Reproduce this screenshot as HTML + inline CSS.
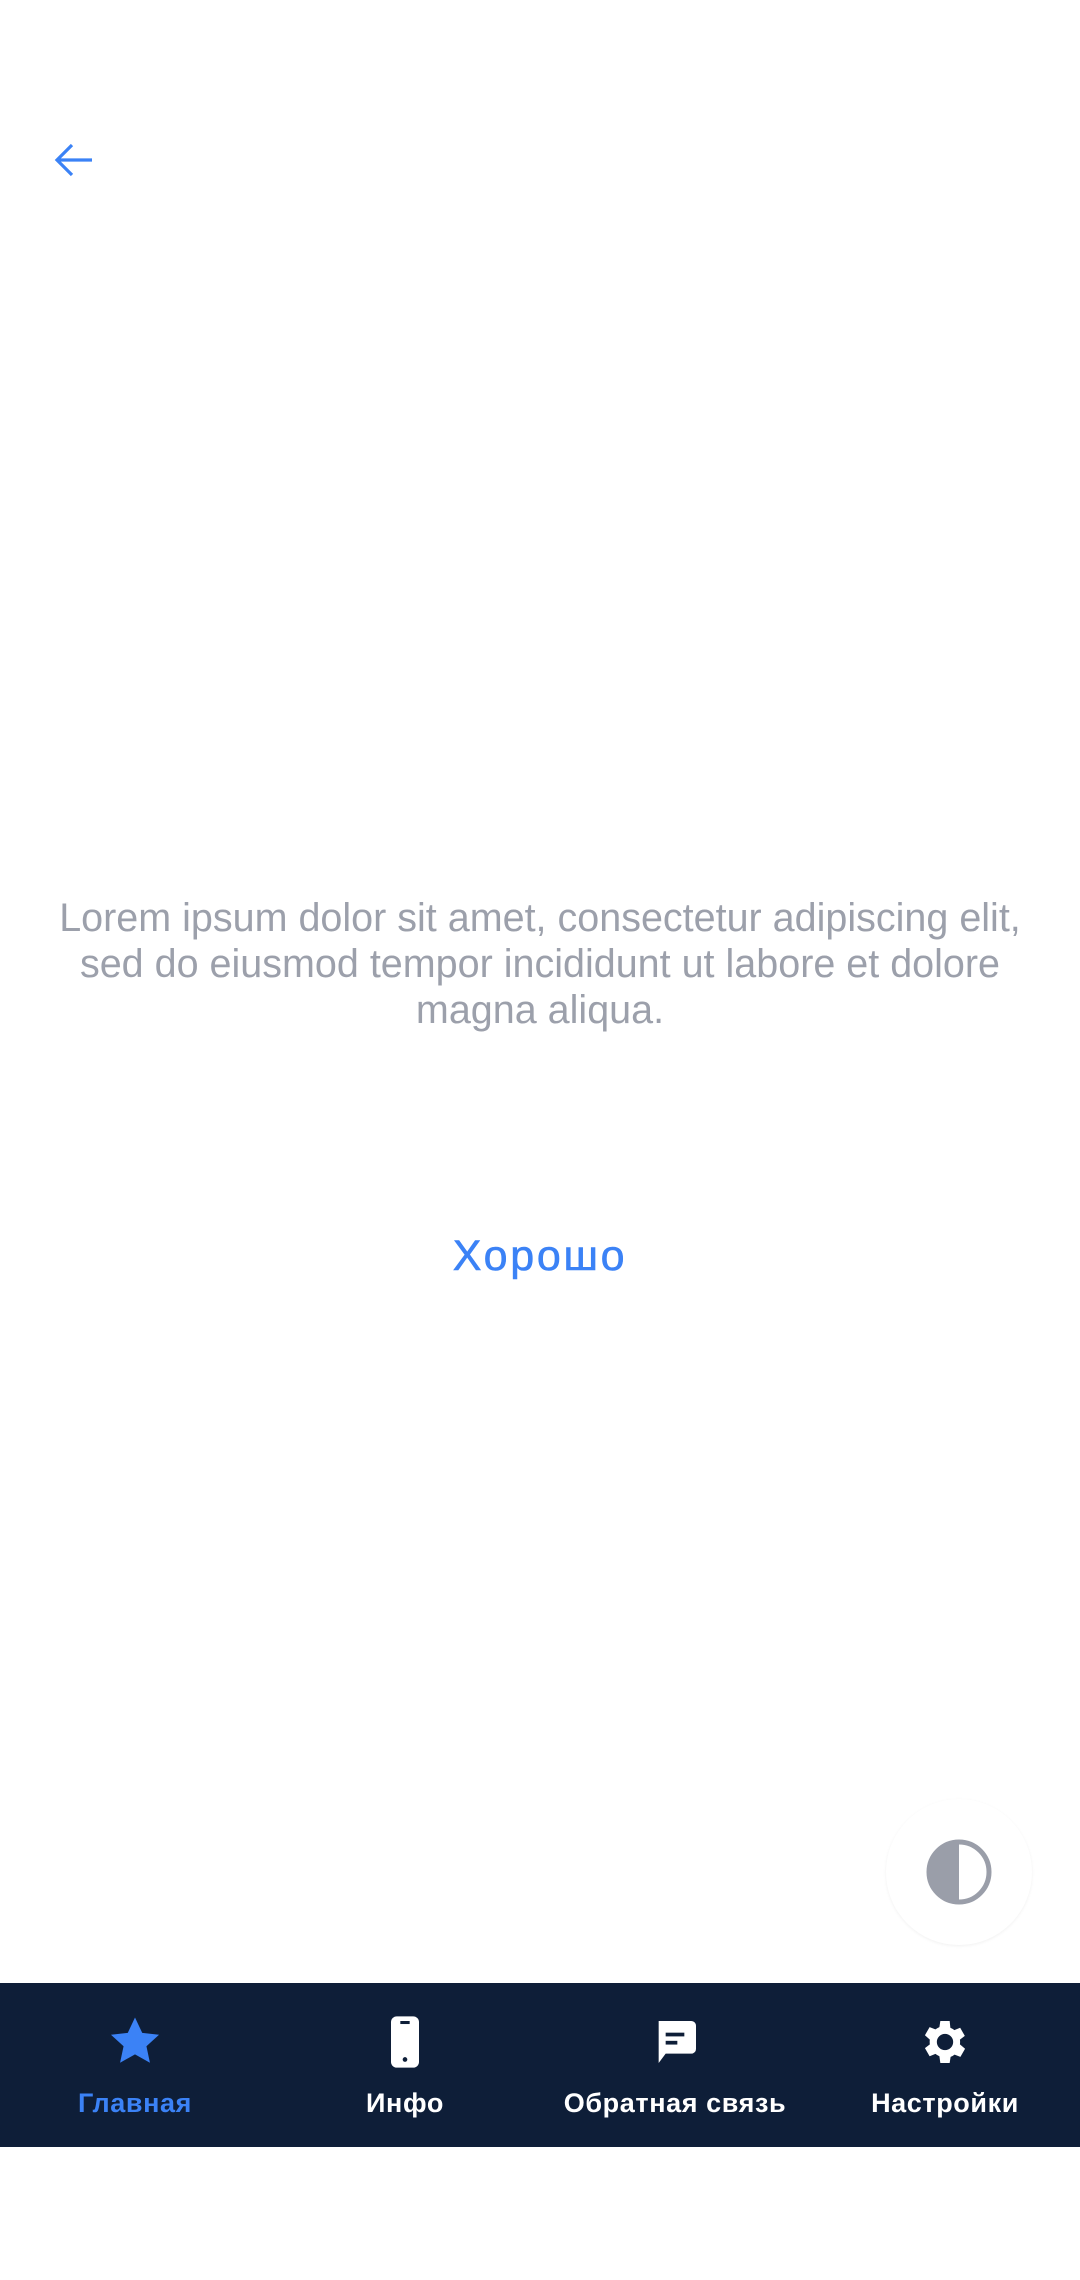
<!DOCTYPE html>
<html><head><meta charset="utf-8"><style>
body{margin:0;width:1080px;height:2280px;background:#fff;position:relative;overflow:hidden;font-family:"Liberation Sans",sans-serif}
.abs{position:absolute}
.txt{left:0;right:0;top:895px;text-align:center;color:#9ca0ab;font-size:39.5px;line-height:46px;letter-spacing:0px;white-space:nowrap}
.ok{left:0;right:0;top:1230px;text-align:center;color:#3b82f6;font-size:43px;line-height:52px;letter-spacing:2.7px;-webkit-text-stroke:0.6px #3b82f6}
.fab{left:886px;top:1799px;width:146px;height:146px;border-radius:50%;background:#fff;box-shadow:0 1px 3px rgba(0,0,0,0.06)}
.nav{left:0;top:1983px;width:1080px;height:164px;background:#0e1e38}
.item{position:absolute;top:0;width:270px;height:164px;text-align:center}
.item svg{position:absolute;left:107px;top:31px}
.item span{position:absolute;left:0;right:0;top:105px;font-size:27px;font-weight:bold;color:#fff;letter-spacing:0.6px}
</style></head><body>
<svg class="abs" style="left:52px;top:140px" width="44" height="40" viewBox="0 0 44 40"><path d="M40 20H5M20 5L5 20l15 15" fill="none" stroke="#3b82f6" stroke-width="3.2"/></svg>
<div class="abs txt">Lorem ipsum dolor sit amet, consectetur adipiscing elit,<br>sed do eiusmod tempor incididunt ut labore et dolore<br>magna aliqua.</div>
<div class="abs ok">Хорошо</div>
<div class="abs fab"><svg style="position:absolute;left:40px;top:40px" width="66" height="66" viewBox="0 0 66 66"><circle cx="33" cy="33" r="30" fill="none" stroke="#9a9ea9" stroke-width="5"/><path d="M33 3a30 30 0 0 0 0 60z" fill="#9a9ea9"/></svg></div>
<div class="abs nav">
<div class="item" style="left:0"><svg width="56" height="56" viewBox="0 0 24 24"><path d="M12 1.5l3.1 6.6 7.2.8-5.4 4.9 1.5 7.1L12 17.3l-6.4 3.6 1.5-7.1L1.7 8.9l7.2-.8z" fill="#3b82f6"/></svg><span style="color:#3b82f6">Главная</span></div>
<div class="item" style="left:270px"><svg width="56" height="56" viewBox="0 0 24 24"><rect x="6" y="1" width="12" height="22" rx="2.5" fill="#fff"/><rect x="10" y="3" width="4" height="1.3" fill="#0e1e38"/><circle cx="12" cy="19.5" r="1" fill="#0e1e38"/></svg><span>Инфо</span></div>
<div class="item" style="left:540px"><svg width="56" height="56" viewBox="0 0 24 24"><path d="M5 3h14a2 2 0 0 1 2 2v10a2 2 0 0 1-2 2H8l-3 4V5a2 2 0 0 1 0 0z" fill="#fff"/><rect x="8" y="8" width="8" height="1.6" fill="#0e1e38"/><rect x="8" y="11.5" width="5" height="1.6" fill="#0e1e38"/></svg><span>Обратная связь</span></div>
<div class="item" style="left:810px"><svg width="56" height="56" viewBox="0 0 24 24"><path fill="#fff" fill-rule="evenodd" d="M19.4 13a7.5 7.5 0 0 0 0-2l2.1-1.6-2-3.5-2.5 1a7.5 7.5 0 0 0-1.7-1L15 3h-4l-.4 2.6a7.5 7.5 0 0 0-1.7 1l-2.5-1-2 3.5L6.5 11a7.5 7.5 0 0 0 0 2l-2.1 1.6 2 3.5 2.5-1a7.5 7.5 0 0 0 1.7 1L11 21h4l.4-2.6a7.5 7.5 0 0 0 1.7-1l2.5 1 2-3.5zM13 15.5a3.5 3.5 0 1 1 0-7 3.5 3.5 0 0 1 0 7z" transform="translate(-1 0)"/></svg><span>Настройки</span></div>
</div>
</body></html>
